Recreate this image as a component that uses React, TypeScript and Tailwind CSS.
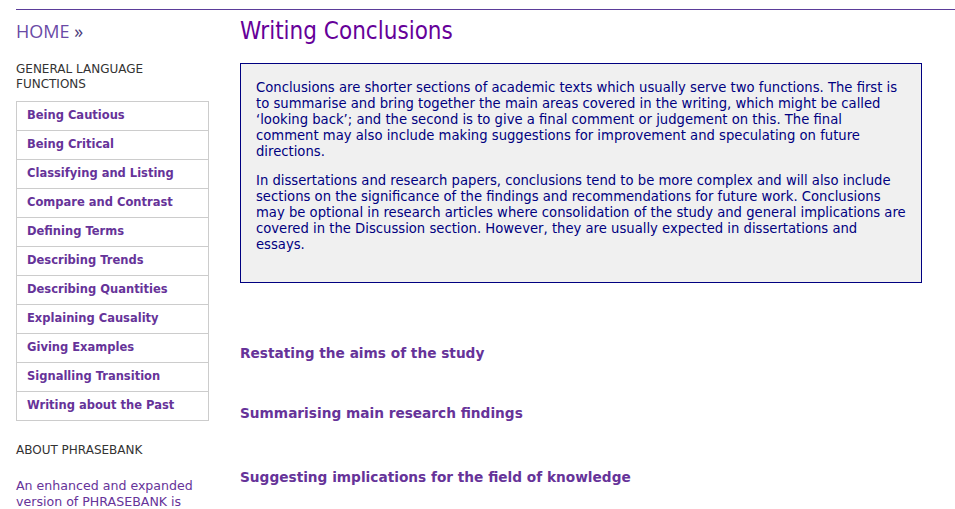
import React from 'react';

const navItems = [
  'Being Cautious',
  'Being Critical',
  'Classifying and Listing',
  'Compare and Contrast',
  'Defining Terms',
  'Describing Trends',
  'Describing Quantities',
  'Explaining Causality',
  'Giving Examples',
  'Signalling Transition',
  'Writing about the Past',
];

const sections = [
  { title: 'Restating the aims of the study', mt: 'mt-[61px]' },
  { title: 'Summarising main research findings', mt: 'mt-[42px]' },
  { title: 'Suggesting implications for the field of knowledge', mt: 'mt-[46px]' },
];

export default function App() {
  return (
    <div className="min-h-screen bg-white pt-[9px] pl-4 font-['DejaVu_Sans',sans-serif]">
      <div className="border-t border-[#5b3d9a] flex">
        {/* left column */}
        <aside className="w-[193px] shrink-0">
          <div className="mt-[10px] font-['Open_Sans',sans-serif] text-[18px] leading-[22px] text-[#6a4aa6]">
            HOME <span className="text-[#4a3b7a]">»</span>
          </div>
          <div className="mt-[20px] text-[12px] leading-[15px] text-[#333] uppercase">
            General Language
            <br />
            Functions
          </div>
          <ul className="mt-[9px] border-x border-b border-[#cccccc]">
            {navItems.map((item) => (
              <li key={item} className="h-[29px] flex items-center pl-[10px] border-t border-[#cccccc]">
                <a className="text-[11.5px] font-bold text-[#663399]">{item}</a>
              </li>
            ))}
          </ul>
          <div className="mt-[21px] text-[12px] leading-[16px] text-[#333]">ABOUT PHRASEBANK</div>
          <p className="mt-[20px] text-[12.6px] leading-[16px] text-[#663399]">
            An enhanced and expanded version of PHRASEBANK is
          </p>
        </aside>

        {/* main column */}
        <main className="ml-[31px] w-[682px]">
          <h1 className="mt-[6px] font-['DejaVu_Sans_Condensed',sans-serif] text-[24px] leading-[30px] text-[#660099]">
            Writing Conclusions
          </h1>
          <div className="mt-[17px] border border-[#000080] bg-[#f0f0f0] px-[15px] pt-[16px] pb-[16px] text-[13.2px] leading-[16px] text-[#000080]">
            <p className="mb-[13px]">
              Conclusions are shorter sections of academic texts which usually serve two functions. The first is
              to summarise and bring together the main areas covered in the writing, which might be called
              ‘looking back’; and the second is to give a final comment or judgement on this. The final comment
              may also include making suggestions for improvement and speculating on future directions.
            </p>
            <p className="mb-[13px]">
              In dissertations and research papers, conclusions tend to be more complex and will also include
              sections on the significance of the findings and recommendations for future work. Conclusions may
              be optional in research articles where consolidation of the study and general implications are
              covered in the Discussion section. However, they are usually expected in dissertations and essays.
            </p>
          </div>
          {sections.map((s) => (
            <h2 key={s.title} className={`${s.mt} text-[13.7px] leading-[18px] font-bold text-[#663399]`}>
              {s.title}
            </h2>
          ))}
        </main>
      </div>
    </div>
  );
}
